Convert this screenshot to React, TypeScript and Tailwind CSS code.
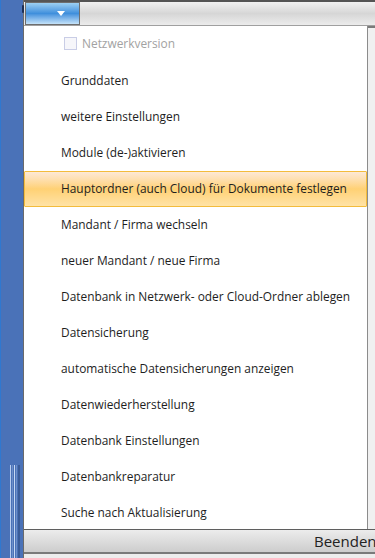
const items = [
  'Grunddaten',
  'weitere Einstellungen',
  'Module (de-)aktivieren',
  'Hauptordner (auch Cloud) für Dokumente festlegen',
  'Mandant / Firma wechseln',
  'neuer Mandant / neue Firma',
  'Datenbank in Netzwerk- oder Cloud-Ordner ablegen',
  'Datensicherung',
  'automatische Datensicherungen anzeigen',
  'Datenwiederherstellung',
  'Datenbank Einstellungen',
  'Datenbankreparatur',
  'Suche nach Aktualisierung',
];

const active = 'Hauptordner (auch Cloud) für Dokumente festlegen';

export default function App() {
  return (
    <div
      className="flex h-[558px] w-[375px] overflow-hidden bg-white text-[11.9px] text-[#1e1e1e]"
      style={{ fontFamily: '"Segoe UI", "Open Sans", "Noto Sans", sans-serif' }}
    >
      {/* left window strip */}
      <div className="relative w-[23px] shrink-0 border-l border-[#2f78d0] bg-[#4a72b8]">
        <div className="absolute left-[21px] top-[5px] h-[8px] w-[2px] rounded-full bg-[#1c2f55]" />
        <div className="absolute bottom-0 left-[9px] top-[465px] flex gap-[1px]">
          <div className="w-[1px] bg-[#b8cdf0]" />
          <div className="w-[1px] bg-[#6f90c8]" />
          <div className="w-[1px] bg-[#c8daf5]" />
          <div className="w-[1px] bg-[#6f90c8]" />
          <div className="w-[2px] bg-[#3a5c98]" />
        </div>
      </div>

      {/* main */}
      <div className="flex min-w-0 flex-1 flex-col border-l border-[#6a6a6a]">
        <div className="h-[2px] shrink-0 bg-[#555555]" />
        <div className="flex h-[23px] shrink-0 items-stretch bg-gradient-to-b from-[#f2f2f2] via-[#d6d6d6] to-[#ececec]">
          <div className="ml-[1px] flex w-[55px] items-center justify-end border border-[#6e6e6e] bg-gradient-to-b from-[#9cd0f2] via-[#3f8fdc] to-[#c4e2f8] pr-[14px]">
            <svg width="8" height="5" viewBox="0 0 8 5">
              <path d="M0 0 L8 0 L4 5 Z" fill="#ffffff" />
            </svg>
          </div>
        </div>
        <div className="h-[1px] shrink-0 bg-[#a0a0a0]" />

        <div className="flex min-h-0 flex-1 overflow-hidden">
          <div className="flex flex-1 flex-col">
            <div className="flex h-[37px] shrink-0 items-center pb-[2px] pl-[40px] text-[#a2a2a2]">
              <div className="mr-[5px] h-[13px] w-[13px] border border-[#c9cde6] bg-[#f6f6fa]" />
              Netzwerkversion
            </div>
            {items.map((item) =>
              item === active ? (
                <div
                  key={item}
                  className="flex h-[36px] shrink-0 items-center rounded-[1px] border border-[#f3bc3c] bg-gradient-to-b from-[#fde9d6] via-[#ffd174] to-[#ffe3a6] pl-[36px]"
                >
                  {item}
                </div>
              ) : (
                <div key={item} className="flex h-[36px] shrink-0 items-center pl-[37px]">
                  {item}
                </div>
              )
            )}
          </div>
          <div className="w-[8px] shrink-0 border-l border-[#8c8c8c] bg-[#f0f0f0]">
            <div className="h-[2px] bg-[#7a7a7a]" />
          </div>
        </div>

        <div className="h-[1px] shrink-0 bg-[#5f5f5f]" />
        <div className="flex h-[22px] shrink-0 items-center overflow-hidden whitespace-nowrap bg-gradient-to-b from-[#ececec] to-[#cdcdcd] pl-[290px] text-[15px] text-[#222]">
          Beenden
        </div>
        <div className="h-[2px] shrink-0 bg-[#7a7a7a]" />
        <div className="h-[4px] shrink-0 bg-[#ededed]" />
      </div>
    </div>
  );
}
